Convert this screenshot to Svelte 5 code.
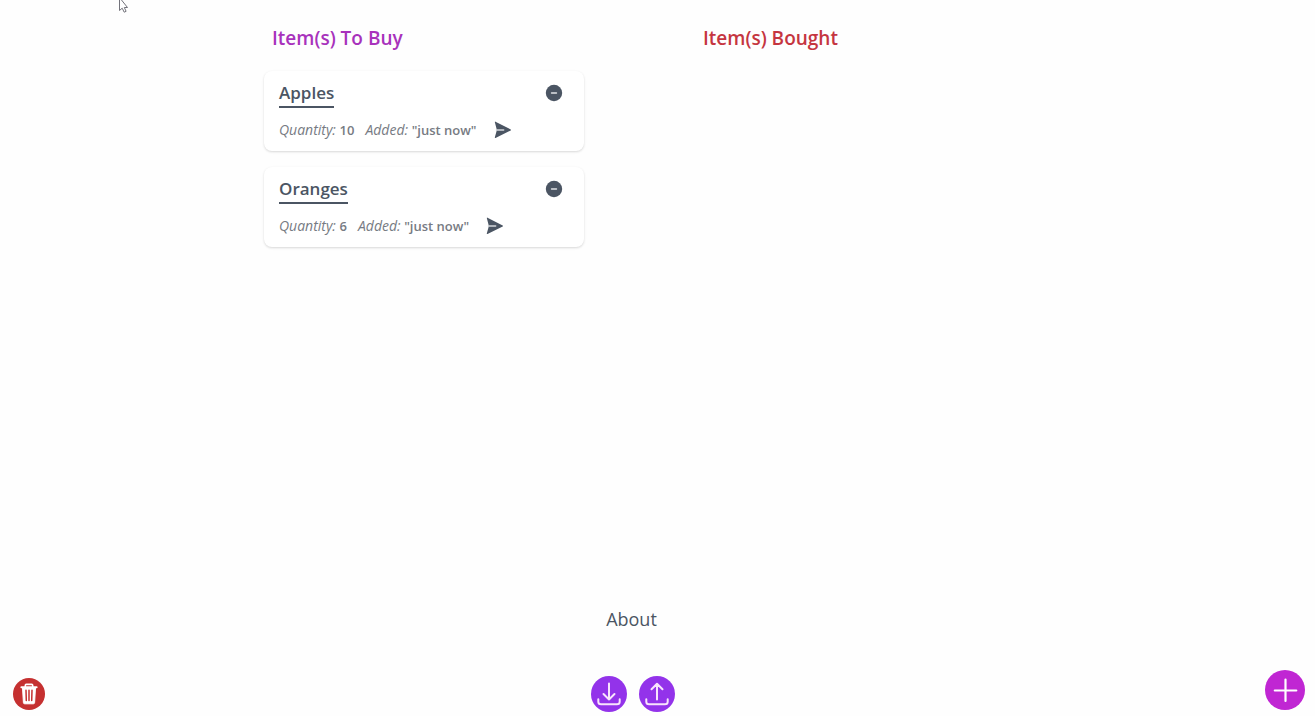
<script>
  let toBuy = $state([
    { name: 'Apples', quantity: 10, added: 'just now' },
    { name: 'Oranges', quantity: 6, added: 'just now' }
  ]);
  let bought = $state([]);

  function remove(list, item) {
    list.splice(list.indexOf(item), 1);
  }

  function markBought(item) {
    bought.push({ ...item });
    remove(toBuy, item);
  }

  function clearAll() {
    toBuy = [];
    bought = [];
  }
</script>

{#snippet card(item, list)}
  <li class="card">
    <div class="top">
      <h3>{item.name}</h3>
      <button class="icon" aria-label="Remove {item.name}" onclick={() => remove(list, item)}>
        <svg width="20" height="20" viewBox="0 0 20 20">
          <circle cx="10" cy="10" r="8.2" fill="#4b5563" />
          <path d="M7.5 10h5" stroke="#e2e4e8" stroke-width="1.4" stroke-linecap="round" />
        </svg>
      </button>
    </div>
    <div class="details">
      <span><em>Quantity:</em> <b>{item.quantity}</b></span>
      <span><em>Added:</em> <b>"{item.added}"</b></span>
      {#if list === toBuy}
        <button class="icon send" aria-label="Mark {item.name} as bought" onclick={() => markBought(item)}>
          <svg width="20" height="20" viewBox="0 0 20 20">
            <path d="M1.8 2.1Q1.7 1.4 2.5 1.7L17.7 9.4Q18.4 10 17.7 10.5L2.5 17.9Q1.7 18.2 1.8 17.4L3.6 11V9z" fill="#4b5563" />
            <path d="M3.4 10h7.3" stroke="#d5d8dd" stroke-width="1.4" stroke-linecap="round" />
          </svg>
        </button>
      {/if}
    </div>
  </li>
{/snippet}

<div class="page">
  <main>
    <section class="buy">
      <h2>Item(s) To Buy</h2>
      <ul>
        {#each toBuy as item}{@render card(item, toBuy)}{/each}
      </ul>
    </section>
    <section class="bought">
      <h2>Item(s) Bought</h2>
      <ul>
        {#each bought as item}{@render card(item, bought)}{/each}
      </ul>
    </section>
  </main>

  <footer>
    <a href="#about">About</a>
    <button class="round trash" aria-label="Delete all items" onclick={clearAll}>
      <svg width="32" height="32" viewBox="0 0 32 32" fill="none" stroke="#fff" stroke-linejoin="round">
        <path d="M12.3 9V7.4q0-1 1-1h5.4q1 0 1 1V9" stroke-width="1.6" />
        <path d="M8.4 9.3h15.2" stroke-width="2" stroke-linecap="round" />
        <path d="M9.5 9.5l.9 15.1q.1 1.2 1.3 1.2h8.6q1.2 0 1.3-1.2l.9-15.1z" fill="#fff" stroke-width="1" />
        <path d="M13 12.2l.3 10.3M16 12.2v10.3M19 12.2l-.3 10.3" stroke="#c53030" stroke-width="1.5" stroke-linecap="round" />
      </svg>
    </button>
    <div class="transfer">
      <button class="round" aria-label="Download list">
        <svg width="36" height="36" viewBox="0 0 36 36">
          <path d="M18 7.5v16M12.5 18l5.5 5.5 5.5-5.5M7.3 23.3v2.4q0 2.6 2.8 2.6h15.8q2.8 0 2.8-2.6v-2.4" />
        </svg>
      </button>
      <button class="round" aria-label="Upload list">
        <svg width="36" height="36" viewBox="0 0 36 36">
          <path d="M18 23.5V8M12.5 13.3L18 7.8l5.5 5.5M7.3 23.3v2.4q0 2.6 2.8 2.6h15.8q2.8 0 2.8-2.6v-2.4" />
        </svg>
      </button>
    </div>
    <button class="round add" aria-label="Add item">
      <svg width="40" height="40" viewBox="0 0 40 40">
        <path d="M20.5 9.5v21.5M9.8 20.5h21.5" stroke="#fff" stroke-width="2.2" stroke-linecap="round" />
      </svg>
    </button>
  </footer>

  <svg class="pointer" width="12" height="16" viewBox="0 0 12 16" aria-hidden="true">
    <path d="M1.5-2.5V10.5l2.7-2.3 2 4 1.9-.9-1.8-3.8H9.5z" fill="#fff" stroke="#73737b" stroke-width="1" />
  </svg>
</div>

<style>
  :global(body) {
    margin: 0;
    background: #fefefe;
  }
  .page {
    min-height: 100vh;
    display: flex;
    flex-direction: column;
    box-sizing: border-box;
    color: #4b5563;
    font-family: "Segoe UI", "Open Sans", "Noto Sans", sans-serif;
  }
  main {
    flex: 1;
    display: grid;
    grid-template-columns: 22fr minmax(0, 320px) 111px minmax(0, 320px) 25fr;
    padding-top: 23px;
  }
  .buy {
    grid-column: 2;
  }
  .bought {
    grid-column: 4;
  }
  h2 {
    margin: 0 0 18px;
    padding-left: 8px;
    font-size: 19px;
    line-height: 30px;
    font-weight: 600;
  }
  .buy h2 {
    color: #a832bc;
  }
  .bought h2 {
    color: #c53540;
  }
  ul {
    list-style: none;
    margin: 0;
    padding: 0;
    display: flex;
    flex-direction: column;
    gap: 16px;
  }
  .card {
    box-sizing: border-box;
    height: 80px;
    padding: 8px 20px 8px 15px;
    border-radius: 8px;
    background: #fff;
    box-shadow: 0 1px 3px rgba(0, 0, 0, 0.1), 0 1px 2px rgba(0, 0, 0, 0.06);
  }
  .top {
    display: flex;
    justify-content: space-between;
    align-items: flex-start;
  }
  h3 {
    margin: 0;
    border-bottom: 2px solid #4b5563;
    font-size: 17px;
    line-height: 27px;
    font-weight: 600;
  }
  .details {
    display: flex;
    align-items: center;
    gap: 11px;
    padding-top: 11px;
    color: #777b83;
    font-size: 14px;
    line-height: 22px;
  }
  b {
    font-size: 13px;
    font-weight: 600;
  }
  button {
    display: block;
    padding: 0;
    border: 0;
    background: none;
    cursor: pointer;
  }
  svg {
    display: block;
  }
  .icon {
    padding-top: 4px;
  }
  .send {
    padding: 0 0 0 5px;
  }
  footer {
    display: grid;
    grid-template-columns: 578fr auto 629fr;
    align-items: end;
    row-gap: 37px;
    padding: 0 10px 4px 13px;
  }
  footer a {
    grid-column: 2;
    justify-self: center;
    padding-right: 4px;
    color: #4b5563;
    font-size: 18px;
    line-height: 28px;
    text-decoration: none;
  }
  .round {
    border-radius: 50%;
    background: #9333ea;
  }
  .trash {
    grid-area: 2 / 1;
    justify-self: start;
    margin-bottom: 2px;
    background: #c53030;
  }
  .transfer {
    grid-area: 2 / 2;
    display: flex;
    gap: 12px;
  }
  .transfer path {
    fill: none;
    stroke: #f8e4fc;
    stroke-width: 2;
    stroke-linecap: round;
    stroke-linejoin: round;
  }
  .add {
    grid-area: 2 / 3;
    justify-self: end;
    margin-bottom: 2px;
    background: #c026d3;
  }
  .pointer {
    position: absolute;
    top: 0;
    left: 118px;
    pointer-events: none;
  }
</style>
